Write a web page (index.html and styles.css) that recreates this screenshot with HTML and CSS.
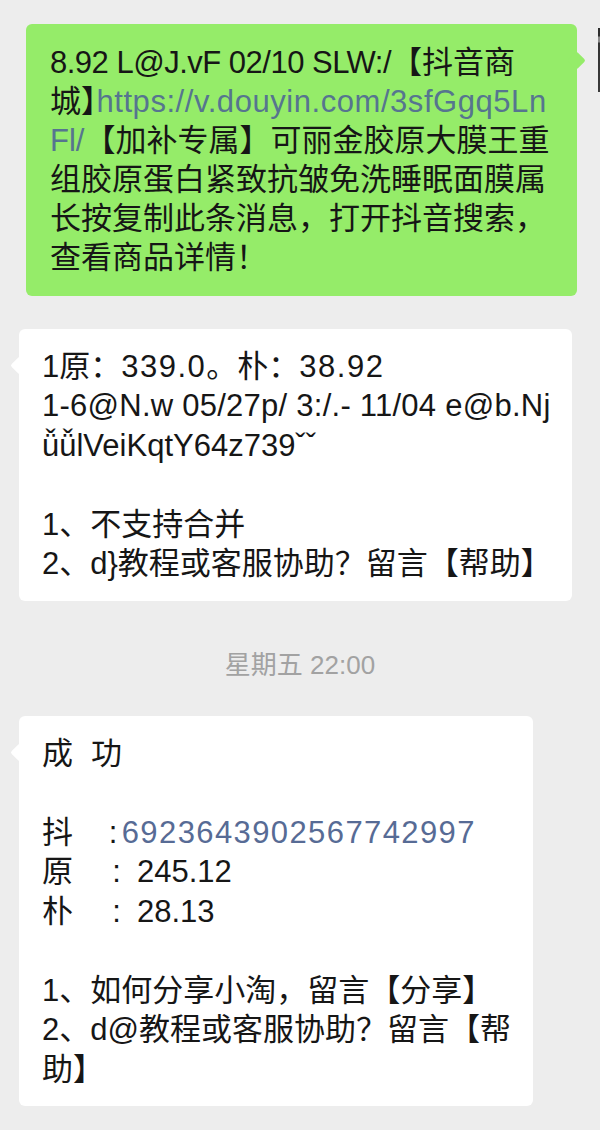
FILE: index.html
```html
<!DOCTYPE html>
<html lang="zh-CN">
<head>
<meta charset="utf-8">
<title>聊天</title>
<link rel="stylesheet" href="styles.css">
</head>
<body>
<div class="chat">
  <div class="row row-right">
    <div class="bubble bubble-green bubble-1">
      <div class="line"><span class="tight">8.92 L@J.vF 02/10 SLW:/</span>【抖音商</div>
      <div class="line">城<span class="halt">】</span><span class="link link-green wide">https://v.douyin.com/3sfGgq5Ln</span></div>
      <div class="line"><span class="link link-green">Fl/</span>【加补专属】可丽金胶原大膜王重</div>
      <div class="line">组胶原蛋白紧致抗皱免洗睡眠面膜属</div>
      <div class="line">长按复制此条消息，打开抖音搜索，</div>
      <div class="line">查看商品详情！</div>
    </div>
    <div class="avatar-edge"></div>
  </div>

  <div class="row row-left">
    <div class="bubble bubble-white bubble-2">
      <div class="line">1原：<span class="num">339.0</span>。朴：<span class="num">38.92</span></div>
      <div class="line"><span class="slight">1-6@N.w 05/27p/ 3:/.- 11/04 e@b.Nj</span></div>
      <div class="line">ǚǚlVeiKqtY64z739ˇˇ</div>
      <div class="line blank">&nbsp;</div>
      <div class="line">1、不支持合并</div>
      <div class="line">2、d}教程或客服协助？留言【帮助】</div>
    </div>
  </div>

  <div class="time">星期五 22:00</div>

  <div class="row row-left">
    <div class="bubble bubble-white bubble-3">
      <div class="line">成<span class="gap-word">功</span></div>
      <div class="line blank">&nbsp;</div>
      <div class="line"><span class="key key-1">抖</span><span class="colon">:</span><span class="link link-white val-1">6923643902567742997</span></div>
      <div class="line"><span class="key key-2">原</span><span class="colon">:</span><span class="val-2">245.12</span></div>
      <div class="line"><span class="key key-2">朴</span><span class="colon">:</span><span class="val-2">28.13</span></div>
      <div class="line blank">&nbsp;</div>
      <div class="line">1、如何分享小淘，留言【分享】</div>
      <div class="line">2、d@教程或客服协助？留言【帮</div>
      <div class="line">助】</div>
    </div>
  </div>
</div>
</body>
</html>
```

FILE: styles.css
```css
html, body {
  margin: 0;
  padding: 0;
  background: #ededed;
}

body {
  width: 600px;
  height: 1130px;
  overflow: hidden;
  font-family: "Liberation Sans", "Noto Sans CJK SC", sans-serif;
  color: #161616;
}

.chat {
  display: flex;
  flex-direction: column;
  padding-top: 24px;
}

.row {
  display: flex;
  align-items: flex-start;
}

.row-right {
  justify-content: flex-end;
  gap: 21px;
}

.row-left {
  justify-content: flex-start;
  padding-left: 19px;
}

.bubble {
  position: relative;
  box-sizing: border-box;
  border-radius: 6px;
  font-size: 31px;
  line-height: 39.5px;
  white-space: nowrap;
}

.bubble::before {
  content: "";
  position: absolute;
  top: 30px;
  width: 13px;
  height: 13px;
  border-radius: 2px;
  transform: rotate(45deg);
}

.bubble-green {
  background: #95ec69;
}

.bubble-green::before {
  right: -6px;
  background: #95ec69;
}

.bubble-white {
  background: #ffffff;
}

.bubble-white::before {
  left: -6px;
  background: #ffffff;
}

.bubble-1 {
  width: 551px;
  height: 272px;
  padding: 19px 24px;
  line-height: 39px;
}

.bubble-2 {
  width: 553px;
  height: 272px;
  padding: 17.5px 23px;
  margin-top: 33px;
}

.bubble-3 {
  width: 514px;
  height: 390px;
  padding: 17.5px 23px;
}

.avatar-edge {
  width: 2px;
  height: 64px;
  margin-top: 4px;
  background: linear-gradient(#2d2d2d 0, #2d2d2d 8px, #8a8a8a 9px, #8a8a8a 14px, #333 15px, #3a3a3a 100%);
}

.line {
  display: block;
}

.tight {
  letter-spacing: -0.5px;
}

.halt {
  font-feature-settings: "halt";
}

.wide {
  letter-spacing: 0.55px;
}

.num {
  letter-spacing: 1.5px;
}

.slight {
  letter-spacing: 0.25px;
}

.link-green {
  color: #56758f;
}

.link-white {
  color: #576b95;
}

.time {
  margin-top: 49px;
  margin-bottom: 36px;
  height: 30px;
  line-height: 30px;
  text-align: center;
  font-size: 26px;
  color: #a2a2a2;
}

.gap-word {
  margin-left: 18px;
}

.key {
  display: inline-block;
}

.key-1 {
  width: 66.7px;
}

.key-2 {
  width: 70.2px;
}

.val-1 {
  margin-left: 4.4px;
  letter-spacing: 1.4px;
}

.val-2 {
  margin-left: 16.2px;
}
```
